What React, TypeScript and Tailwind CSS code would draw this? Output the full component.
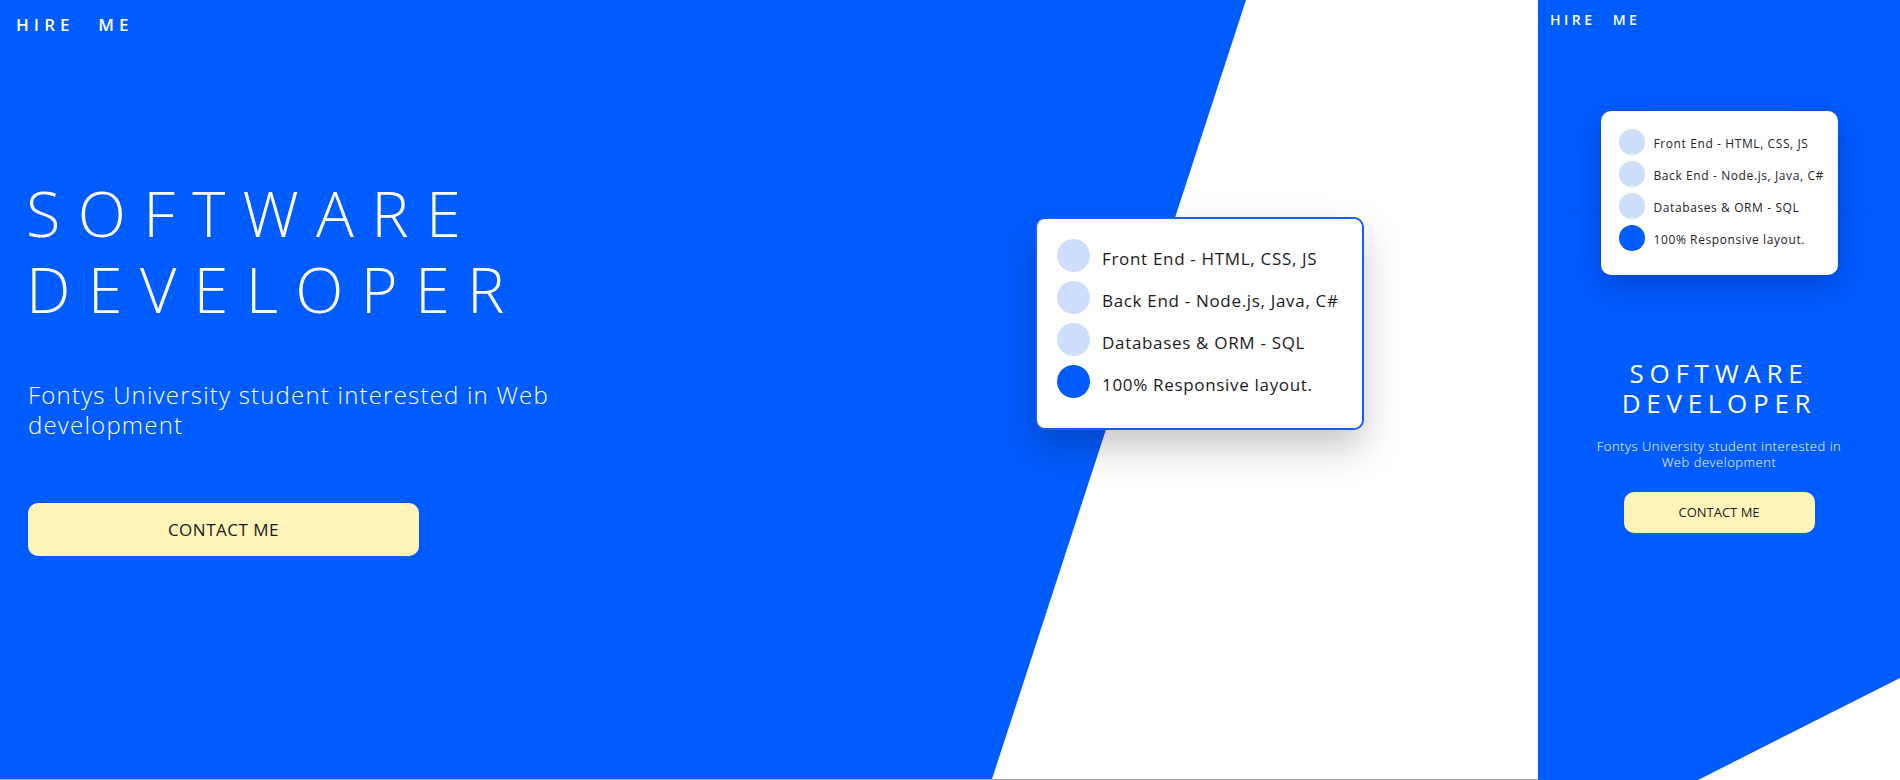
import React from "react";

const skills = [
  { label: "Front End - HTML, CSS, JS", active: false },
  { label: "Back End - Node.js, Java, C#", active: false },
  { label: "Databases & ORM - SQL", active: false },
  { label: "100% Responsive layout.", active: true },
];

function SkillCard({ compact }: { compact?: boolean }) {
  if (compact) {
    return (
      <div className="w-[237px] rounded-[10px] bg-white pt-[18px] pb-[24px] pl-[18px] shadow-[0_10px_30px_rgba(0,20,120,0.35)]">
        <ul className="flex flex-col gap-[6px]">
          {skills.map((s) => (
            <li key={s.label} className="flex items-start gap-[9px]">
              <span
                className={
                  s.active
                    ? "h-[26px] w-[26px] shrink-0 rounded-full bg-[#005cff]"
                    : "h-[26px] w-[26px] shrink-0 rounded-full bg-[#cddffd]"
                }
              />
              <span className="pt-[7px] text-[12px] leading-4 tracking-[0.05em] whitespace-nowrap text-[#222]">
                {s.label}
              </span>
            </li>
          ))}
        </ul>
      </div>
    );
  }
  return (
    <div className="w-[329px] rounded-[10px] border-2 border-[#1a5dff] bg-white pt-[20px] pb-[30px] pl-[20px] shadow-[0_18px_36px_rgba(0,0,0,0.22)]">
      <ul className="flex flex-col gap-[9px]">
        {skills.map((s) => (
          <li key={s.label} className="flex items-start gap-[12px]">
            <span
              className={
                s.active
                  ? "h-[33px] w-[33px] shrink-0 rounded-full bg-[#005cff]"
                  : "h-[33px] w-[33px] shrink-0 rounded-full bg-[#cddffd]"
              }
            />
            <span className="pt-[8px] text-[17px] leading-[23px] tracking-[0.04em] whitespace-nowrap text-[#1a1a1a]">
              {s.label}
            </span>
          </li>
        ))}
      </ul>
    </div>
  );
}

export default function App() {
  return (
    <div className="flex h-[780px] w-[1900px] overflow-hidden bg-white font-['Open_Sans',sans-serif]">
      {/* desktop view */}
      <section className="relative h-full w-[1538px] shrink-0 border-b border-[#a3a3a3]">
        <div className="absolute inset-0 bg-[#005cff] [clip-path:polygon(0_0,1246px_0,992px_100%,0_100%)]" />
        <div className="relative flex h-full flex-col">
          <header className="pl-4 pt-[13px] text-[17px] leading-6 font-semibold tracking-[0.3em] [word-spacing:14px] text-white">
            HIRE ME
          </header>
          <div className="flex items-start">
            <div className="w-[600px] pl-7 pt-[138px]">
              <h1 className="-ml-[2px] text-[63px] leading-[76px] font-light tracking-[0.275em] text-white">
                SOFTWARE
                <br />
                DEVELOPER
              </h1>
              <p className="mt-[53px] w-[545px] text-[24px] leading-[30px] font-light tracking-[0.05em] text-white">
                Fontys University student interested in Web development
              </p>
              <button
                type="button"
                className="mt-[63px] h-[53px] w-[391px] rounded-[10px] bg-[#fff5bb] text-[17px] tracking-[0.03em] text-[#1a1a1a]"
              >
                CONTACT ME
              </button>
            </div>
            <div className="ml-[435px] mt-[180px]">
              <SkillCard />
            </div>
          </div>
        </div>
      </section>

      {/* mobile view */}
      <section className="relative h-full flex-1">
        <div className="absolute inset-0 bg-[#005cff] [clip-path:polygon(0_0,100%_0,100%_678px,160px_100%,0_100%)]" />
        <div className="absolute inset-x-0 top-[212px] h-px bg-black/5" />
        <div className="relative flex h-full flex-col">
          <header className="pl-3 pt-[10px] text-[14px] leading-5 font-semibold tracking-[0.25em] [word-spacing:10px] text-white">
            HIRE ME
          </header>
          <div className="mt-[81px] flex justify-center">
            <SkillCard compact />
          </div>
          <div className="flex flex-col items-center text-center text-white">
            <h2 className="mt-[83px] text-[26px] leading-[30px] tracking-[0.22em]">
              SOFTWARE
              <br />
              DEVELOPER
            </h2>
            <p className="mt-[20px] w-[260px] text-[13px] leading-[16px] font-light tracking-[0.04em]">
              Fontys University student interested in Web development
            </p>
            <button
              type="button"
              className="mt-[22px] h-[41px] w-[191px] rounded-[10px] bg-[#fff5bb] text-[13px] text-[#1a1a1a]"
            >
              CONTACT ME
            </button>
          </div>
        </div>
      </section>
    </div>
  );
}
